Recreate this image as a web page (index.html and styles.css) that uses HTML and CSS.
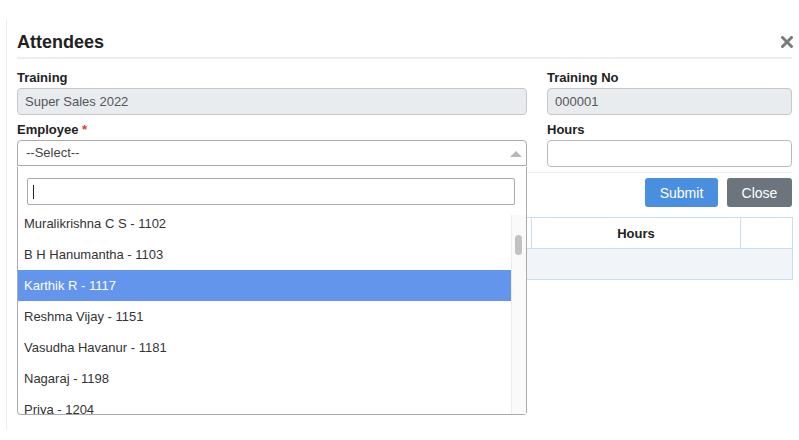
FILE: index.html
```html
<!DOCTYPE html>
<html>
<head>
<meta charset="utf-8">
<link rel="stylesheet" href="styles.css">
</head>
<body>
<div class="modal">
  <div class="modal-header">
    <h4 class="title">Attendees</h4>
    <span class="close-x"><svg width="12" height="12" viewBox="0 0 12 12"><path d="M1.5 1.5 L10.5 10.5 M10.5 1.5 L1.5 10.5" stroke="#7a7a7a" stroke-width="3" stroke-linecap="round"/></svg></span>
  </div>
  <div class="modal-body">
    <div class="form-grid">
      <div class="field">
        <div class="label">Training</div>
        <div class="input readonly">Super Sales 2022</div>
      </div>
      <div class="field">
        <div class="label">Training No</div>
        <div class="input readonly">000001</div>
      </div>
      <div class="field emp">
        <div class="label">Employee <span class="req">*</span></div>
        <div class="select">--Select--<span class="arrow"></span></div>
        <div class="dropdown">
          <div class="search-wrap"><div class="search"><span class="caret"></span></div></div>
          <div class="list">
            <div class="items">
              <div class="item">Muralikrishna C S - 1102</div>
              <div class="item">B H Hanumantha - 1103</div>
              <div class="item active">Karthik R - 1117</div>
              <div class="item">Reshma Vijay - 1151</div>
              <div class="item">Vasudha Havanur - 1181</div>
              <div class="item">Nagaraj - 1198</div>
              <div class="item">Priya - 1204</div>
            </div>
            <div class="track"><div class="thumb"></div></div>
          </div>
        </div>
      </div>
      <div class="field">
        <div class="label">Hours</div>
        <div class="input hours"></div>
      </div>
    </div>
    <div class="sep"></div>
    <div class="actions">
      <button class="btn primary">Submit</button>
      <button class="btn secondary">Close</button>
    </div>
    <table class="grid-table">
      <thead>
        <tr><th class="c1">Employee</th><th class="c2">Hours</th><th class="c3"></th></tr>
      </thead>
      <tbody>
        <tr><td colspan="3"></td></tr>
      </tbody>
    </table>
  </div>
</div>
</body>
</html>
```

FILE: styles.css
```css
* { box-sizing: border-box; }
html, body { margin: 0; padding: 0; background: #fff; }
body {
  font-family: "Liberation Sans", Arial, Helvetica, sans-serif;
  font-size: 13px;
  color: #333;
  width: 799px;
  height: 440px;
  overflow: hidden;
}
.modal {
  margin: 20px 0 0 6px;
  height: 410px;
  border-left: 1px solid #ececec;
  padding: 0 7px 0 10px;
}
.modal-header {
  display: flex;
  align-items: center;
  justify-content: space-between;
  padding-top: 8px;
  padding-bottom: 1px;
  border-bottom: 2px solid #eceef0;
}
.title {
  margin: 0;
  font-size: 18px;
  line-height: 28px;
  font-weight: bold;
  color: #222;
}
.close-x { display: flex; margin-right: -1px; }
.modal-body { padding-top: 11px; }
.form-grid {
  display: grid;
  grid-template-columns: 510px 245px;
  column-gap: 20px;
  row-gap: 7px;
}
.field { position: relative; }
.label {
  font-weight: bold;
  font-size: 13px;
  line-height: 16px;
  margin-bottom: 2px;
  color: #222;
}
.req { color: #e53935; }
.input {
  height: 27px;
  border: 1px solid #c6c9cc;
  border-radius: 4px;
  padding: 0 7px;
  line-height: 25px;
  color: #555;
}
.input.readonly { background: #e9ecef; }
.select {
  position: relative;
  height: 26px;
  border: 1px solid #aaa;
  border-radius: 4px 4px 0 0;
  padding: 0 8px;
  line-height: 24px;
  color: #444;
  background: #fff;
}
.arrow {
  position: absolute;
  right: 4px;
  top: 10px;
  width: 0; height: 0;
  border-left: 6px solid transparent;
  border-right: 6px solid transparent;
  border-bottom: 6px solid #b8b8b8;
}
.dropdown {
  position: absolute;
  left: 0;
  top: 166px;
  top: calc(100%);
  width: 510px;
  height: 248px;
  background: #fff;
  border: 1px solid #aaa;
  border-top: none;
  border-radius: 0 0 4px 4px;
  z-index: 5;
  display: flex;
  flex-direction: column;
}
.search-wrap { padding: 11px 11px 0 9px; }
.search {
  height: 27px;
  border: 1px solid #aaa;
  border-radius: 2px;
  position: relative;
}
.caret {
  position: absolute;
  left: 5px;
  top: 6px;
  width: 1px;
  height: 14px;
  background: #222;
}
.list {
  margin-top: 10px;
  flex: 1;
  display: flex;
  overflow: hidden;
}
.items {
  flex: 1;
  margin-top: -7px;
}
.item {
  height: 31px;
  line-height: 31px;
  padding-left: 6px;
  color: #333;
  white-space: nowrap;
}
.item.active { background: #6495ed; color: #fff; }
.track {
  width: 15px;
  background: #fafafa;
  border-left: 1px solid #ececec;
  padding: 20px 0 0 3px;
}
.thumb {
  width: 7px;
  height: 20px;
  border-radius: 4px;
  background: #c2c2c2;
}
.hours { height: 27px; border-color: #b9bdc1; }
.sep {
  margin-top: 5px;
  height: 1px;
  background: #eceef0;
}
.actions {
  display: flex;
  justify-content: flex-end;
  gap: 9px;
  margin-top: 5px;
}
.btn {
  font-family: inherit;
  font-size: 14px;
  height: 29px;
  border: none;
  border-radius: 3px;
  color: #fff;
  padding: 0;
}
.btn.primary { background: #4a8fdf; width: 73px; }
.btn.secondary { background: #6c757d; width: 65px; }
.grid-table {
  margin-top: 10px;
  width: 776px;
  border-collapse: collapse;
}
.grid-table th {
  height: 31px;
  border: 1px solid #c9ddf3;
  font-weight: bold;
  font-size: 13px;
  color: #222;
  background: #fff;
}
.grid-table .c1 { width: 514px; }
.grid-table .c2 { width: 209px; }
.grid-table td {
  height: 31px;
  border: 1px solid #c9ddf3;
  background: #f1f4f8;
}
```
